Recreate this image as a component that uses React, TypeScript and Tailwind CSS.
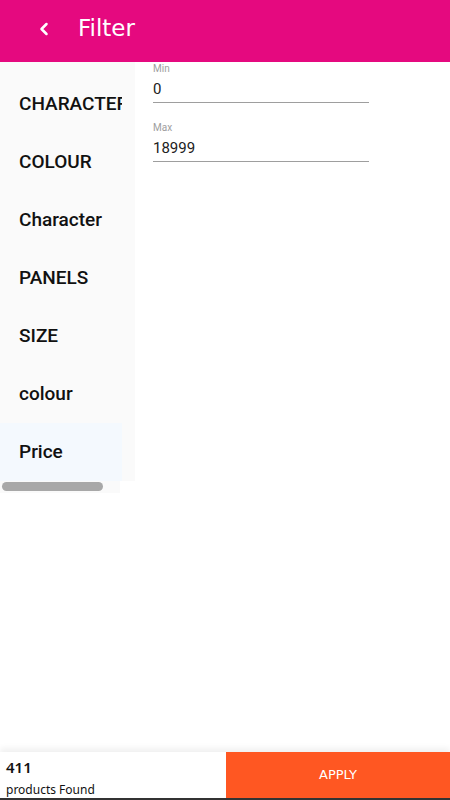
import { ChevronLeft } from 'lucide-react';

const categories = ['CHARACTER', 'COLOUR', 'Character', 'PANELS', 'SIZE', 'colour', 'Price'];

function PriceField({ label, value }: { label: string; value: string }) {
  return (
    <div className="w-[216px] border-b border-[#9e9e9e] pb-[4px]">
      <div className="text-[10px] leading-[12px] text-[#9e9e9e]">{label}</div>
      <div className="mt-[5px] text-[15px] leading-[18px] text-[#212121]">{value}</div>
    </div>
  );
}

export default function App() {
  return (
    <div className="flex h-[800px] w-[450px] flex-col bg-white font-['Roboto',sans-serif]">
      {/* Header */}
      <div className="flex h-[62px] shrink-0 items-center bg-[#e5097f] pb-[5px] pl-[34px] font-['DejaVu_Sans',sans-serif] text-white">
        <ChevronLeft size={20} strokeWidth={3} />
        <span className="ml-[24px] text-[23px]">Filter</span>
      </div>

      {/* Body */}
      <div className="flex flex-1">
        <div className="flex w-[135px] shrink-0 flex-col self-start">
          <div className="flex flex-col bg-[#fafafa] pt-[13px]">
            {categories.map((c) => (
              <div
                key={c}
                className={
                  'flex h-[58px] w-[122px] items-center overflow-hidden whitespace-nowrap pl-[19px] text-[19px] font-medium text-[#111] ' +
                  (c === 'Price' ? 'bg-[#f4f9fe]' : '')
                }
              >
                {c}
              </div>
            ))}
          </div>
          <div className="w-[120px] bg-[#fafafa] pb-[2px] pt-[1px]">
            <div className="ml-[2px] h-[9px] w-[101px] rounded-full bg-[#a8a8a8]" />
          </div>
        </div>

        <div className="flex flex-col gap-[19px] pl-[18px] pt-[1px]">
          <PriceField label="Min" value="0" />
          <PriceField label="Max" value="18999" />
        </div>
      </div>

      {/* Bottom bar */}
      <div className="flex h-[48px] shrink-0 border-b-2 border-[#333] shadow-[0_-4px_6px_rgba(0,0,0,0.06)]">
        <div className="flex w-[226px] flex-col justify-end bg-white pl-[6px] font-['Noto_Sans',sans-serif]">
          <span className="text-[15px] font-semibold leading-[18px] text-[#111]">411</span>
          <span className="mt-[6px] text-[12px] leading-[16px] text-[#111]">products Found</span>
        </div>
        <div className="flex flex-1 items-center justify-center bg-[#ff5722] font-['DejaVu_Sans',sans-serif] text-[13px] text-white">
          APPLY
        </div>
      </div>
    </div>
  );
}
